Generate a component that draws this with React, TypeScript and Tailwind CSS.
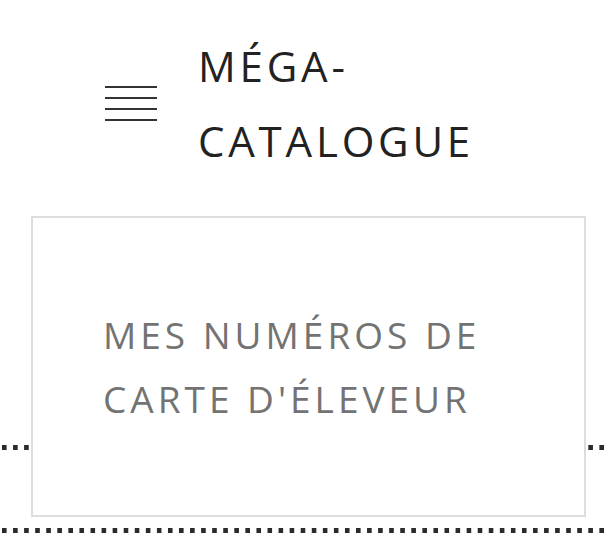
export default function App() {
  return (
    <div className="min-h-[539px] w-[610px] bg-white font-['Open_Sans',sans-serif]">
      <header className="flex items-center pl-[105px] pt-[28px]">
        <div className="flex w-[52px] flex-col gap-[9px]" aria-label="Menu">
          <span className="h-[2px] bg-[#333]" />
          <span className="h-[2px] bg-[#333]" />
          <span className="h-[2px] bg-[#333]" />
          <span className="h-[2px] bg-[#333]" />
        </div>
        <h1 className="ml-[41px] text-[42px] leading-[75px] font-normal tracking-[3.8px] text-[#222]">
          MÉGA-
          <br />
          CATALOGUE
        </h1>
      </header>

      <div className="relative mt-[38px]">
        <div className="absolute top-[229px] right-0 left-0 h-[5px] bg-[linear-gradient(to_right,#2b2b2b_5px,transparent_5px)] bg-[length:11.07px_5px] bg-[position:2px_0] bg-repeat-x" />
        <div className="relative z-10 ml-[31px] flex h-[301px] w-[555px] items-center border-2 border-[#dddddd] bg-white pl-[70px]">
          <p className="text-[37px] leading-[64px] tracking-[4px] text-[#737373]">
            MES NUMÉROS DE
            <br />
            CARTE D'ÉLEVEUR
          </p>
        </div>
      </div>

      <div className="mt-[11px] h-[5px] bg-[linear-gradient(to_right,#2b2b2b_5px,transparent_5px)] bg-[length:11.07px_5px] bg-[position:2px_0] bg-repeat-x" />
    </div>
  )
}
